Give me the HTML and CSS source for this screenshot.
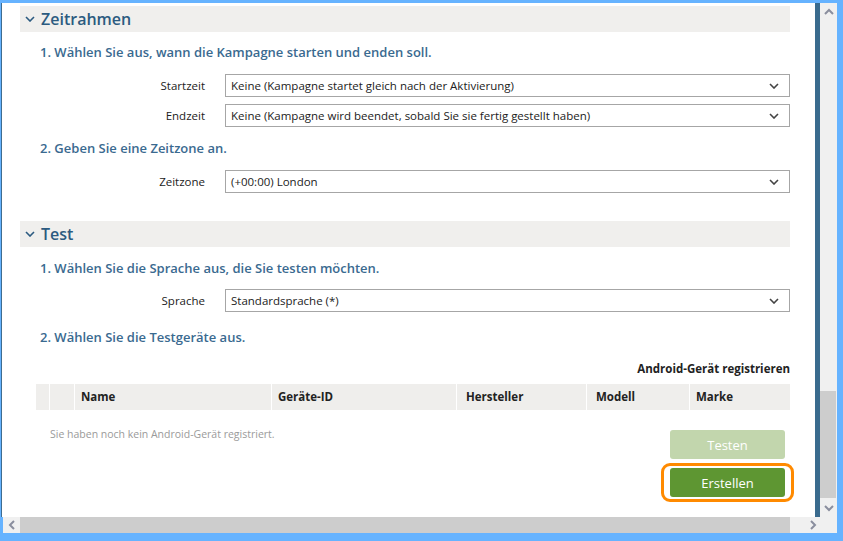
FILE: index.html
```html
<!DOCTYPE html>
<html lang="de">
<head>
<meta charset="utf-8">
<title>Kampagne</title>
<link rel="stylesheet" href="styles.css">
</head>
<body>
<div class="window">
  <div class="viewport">
    <div class="content">
      <div class="section-head">
        <svg class="head-chev" width="10" height="6" viewBox="0 0 10 6"><path d="M1 1 L5 5 L9 1" fill="none" stroke="#2c5b80" stroke-width="1.6"/></svg>
        <span class="head-title">Zeitrahmen</span>
      </div>
      <div class="step s1">1. Wählen Sie aus, wann die Kampagne starten und enden soll.</div>
      <div class="field f-first">
        <span class="label">Startzeit</span>
        <div class="select"><span>Keine (Kampagne startet gleich nach der Aktivierung)</span><svg class="sel-chev" width="10" height="6" viewBox="0 0 10 6"><path d="M1 1 L5 5 L9 1" fill="none" stroke="#444" stroke-width="1.6"/></svg></div>
      </div>
      <div class="field f-next">
        <span class="label">Endzeit</span>
        <div class="select"><span>Keine (Kampagne wird beendet, sobald Sie sie fertig gestellt haben)</span><svg class="sel-chev" width="10" height="6" viewBox="0 0 10 6"><path d="M1 1 L5 5 L9 1" fill="none" stroke="#444" stroke-width="1.6"/></svg></div>
      </div>
      <div class="step s2">2. Geben Sie eine Zeitzone an.</div>
      <div class="field f-first">
        <span class="label">Zeitzone</span>
        <div class="select"><span>(+00:00) London</span><svg class="sel-chev" width="10" height="6" viewBox="0 0 10 6"><path d="M1 1 L5 5 L9 1" fill="none" stroke="#444" stroke-width="1.6"/></svg></div>
      </div>

      <div class="section-head test-head">
        <svg class="head-chev" width="10" height="6" viewBox="0 0 10 6"><path d="M1 1 L5 5 L9 1" fill="none" stroke="#2c5b80" stroke-width="1.6"/></svg>
        <span class="head-title">Test</span>
      </div>
      <div class="step s3">1. Wählen Sie die Sprache aus, die Sie testen möchten.</div>
      <div class="field f-lang">
        <span class="label">Sprache</span>
        <div class="select"><span>Standardsprache (*)</span><svg class="sel-chev" width="10" height="6" viewBox="0 0 10 6"><path d="M1 1 L5 5 L9 1" fill="none" stroke="#444" stroke-width="1.6"/></svg></div>
      </div>
      <div class="step s4">2. Wählen Sie die Testgeräte aus.</div>
      <div class="register">Android-Gerät registrieren</div>
      <div class="table-head">
        <div class="th"></div>
        <div class="th"></div>
        <div class="th">Name</div>
        <div class="th">Geräte-ID</div>
        <div class="th th-wide">Hersteller</div>
        <div class="th th-wide">Modell</div>
        <div class="th">Marke</div>
      </div>
      <div class="bottom">
        <div class="empty">Sie haben noch kein Android-Gerät registriert.</div>
        <div class="buttons">
          <button class="btn btn-disabled">Testen</button>
          <div class="focus-ring"><button class="btn btn-primary">Erstellen</button></div>
        </div>
      </div>
    </div>
  </div>
  <div class="vscroll">
    <div class="arrow"><svg width="10" height="7" viewBox="0 0 10 7"><path d="M1 6 L5 2 L9 6" fill="none" stroke="#8a8e9e" stroke-width="2"/></svg></div>
    <div class="vtrack"><div class="vthumb"></div></div>
    <div class="arrow"><svg width="10" height="7" viewBox="0 0 10 7"><path d="M1 1 L5 5 L9 1" fill="none" stroke="#8a8e9e" stroke-width="2"/></svg></div>
  </div>
  <div class="hscroll">
    <div class="harrow"><svg width="7" height="10" viewBox="0 0 7 10"><path d="M6 1 L2 5 L6 9" fill="none" stroke="#8a8e9e" stroke-width="2"/></svg></div>
    <div class="htrack"></div>
    <div class="hrest"><svg width="7" height="10" viewBox="0 0 7 10"><path d="M1 1 L5 5 L1 9" fill="none" stroke="#8a8e9e" stroke-width="2"/></svg></div>
  </div>
  <div class="corner"></div>
</div>
</body>
</html>
```
FILE: styles.css
```css
html, body {
  margin: 0;
  padding: 0;
}
body {
  width: 843px;
  height: 541px;
  overflow: hidden;
  font-family: "Open Sans", "Noto Sans", sans-serif;
}
.window {
  width: 843px;
  height: 541px;
  box-sizing: border-box;
  background: #66b3ff;
  padding: 3px 6px 8px 0;
  display: grid;
  grid-template-columns: 820px 17px;
  grid-template-rows: 514px 16px;
}
.viewport {
  background: #fff;
  margin-left: 1px;
  border-left: 1px solid #3e6c90;
  border-right: 5px solid #3a6b8e;
  overflow: hidden;
}
.content {
  padding: 3px 25px 0 18px;
}
.section-head {
  height: 26px;
  background: #f0efed;
  display: flex;
  align-items: center;
}
.head-chev {
  margin-left: 5px;
  margin-right: 6px;
}
.head-title {
  font-size: 16px;
  font-weight: 600;
  color: #2c5b80;
  line-height: 26px;
}
.step {
  font-size: 13px;
  font-weight: 600;
  color: #3a6a90;
  line-height: 20px;
  padding-left: 20px;
}
.s1 { margin-top: 10px; }
.s2 { margin-top: 11px; }
.s3 { margin-top: 11px; }
.s4 { margin-top: 15px; }
.field {
  display: flex;
  align-items: center;
  gap: 20px;
}
.f-first { margin-top: 12px; }
.f-next { margin-top: 7px; }
.f-lang { margin-top: 11px; }
.label {
  width: 185px;
  text-align: right;
  font-size: 11.5px;
  color: #222;
}
.select {
  flex: 1;
  height: 23px;
  box-sizing: border-box;
  border: 1px solid #a6a6a6;
  display: flex;
  align-items: center;
  justify-content: space-between;
  padding: 0 10px 0 5px;
  font-size: 11.5px;
  color: #222;
}
.test-head { margin-top: 28px; }
.register {
  margin-top: 12px;
  text-align: right;
  font-size: 11.5px;
  font-weight: 700;
  color: #222;
  line-height: 20px;
}
.table-head {
  margin-top: 5px;
  margin-left: 16px;
  display: grid;
  grid-template-columns: 13px 24px 196px 184px 129px 102px 1fr;
  column-gap: 1px;
  height: 26px;
}
.th {
  background: #efeeec;
  font-size: 11.5px;
  font-weight: 700;
  color: #222;
  line-height: 26px;
  padding-left: 6px;
}
.th-wide { padding-left: 9px; }
.bottom {
  display: flex;
  justify-content: space-between;
  margin-right: -4px;
}
.empty {
  margin-top: 16px;
  margin-left: 30px;
  font-size: 10.5px;
  color: #9a9a9a;
  line-height: 16px;
}
.buttons {
  margin-top: 20px;
  display: flex;
  flex-direction: column;
  align-items: flex-end;
}
.btn {
  width: 115px;
  height: 29px;
  border: none;
  border-radius: 3px;
  color: #fff;
  font-family: "Open Sans", "Noto Sans", sans-serif;
  font-size: 13px;
  padding: 0;
}
.btn-disabled {
  background: #c2d6ad;
  margin-right: 9px;
}
.btn-primary {
  background: #5e9632;
  display: block;
}
.focus-ring {
  margin-top: 4px;
  border: 3px solid #ff8a00;
  border-radius: 9px;
  padding: 2px 6px;
}
.vscroll {
  background: #f0f0f0;
  display: flex;
  flex-direction: column;
}
.arrow {
  height: 17px;
  display: flex;
  align-items: center;
  justify-content: center;
}
.vtrack {
  flex: 1;
  position: relative;
}
.vthumb {
  position: absolute;
  left: 0;
  right: 1px;
  top: 371px;
  height: 107px;
  background: #cdcdcd;
}
.hscroll {
  margin-left: 3px;
  display: flex;
  background: #f0f0f0;
}
.harrow {
  width: 17px;
  display: flex;
  align-items: center;
  justify-content: center;
}
.htrack {
  width: 770px;
  background: #cdcdcd;
}
.hrest {
  flex: 1;
  display: flex;
  align-items: center;
  justify-content: flex-end;
  padding-right: 3px;
}
.corner {
  background: #f0f0f0;
}
```
